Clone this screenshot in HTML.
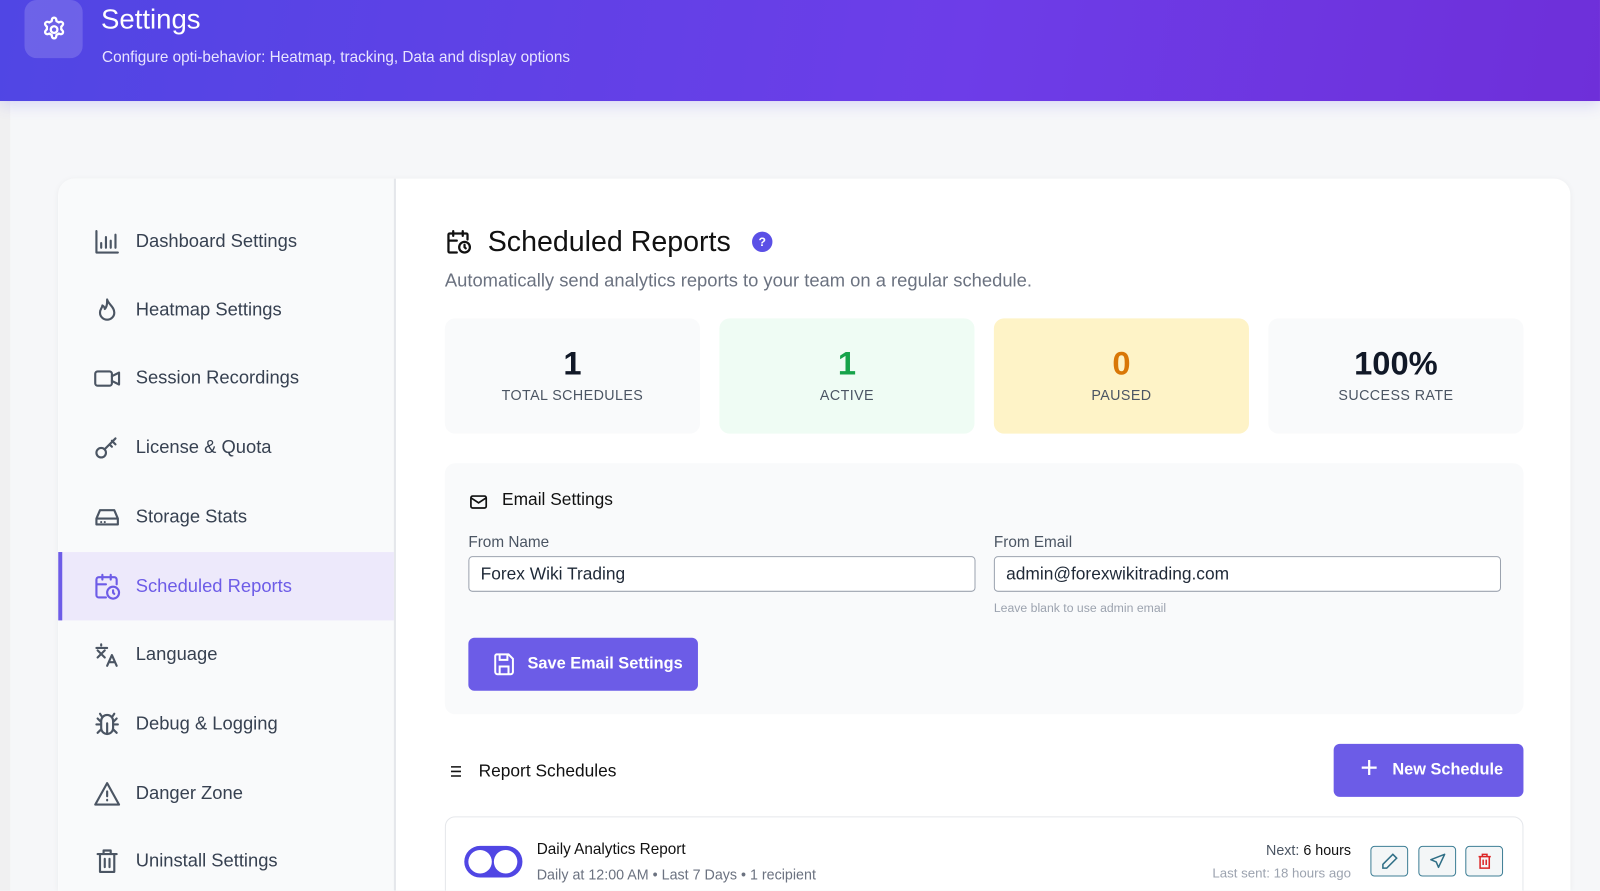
<!DOCTYPE html>
<html><head><meta charset="utf-8"><style>
*{box-sizing:border-box;margin:0;padding:0}
html,body{width:1600px;height:891px;overflow:hidden;background:#f6f7f9}
#w{position:absolute;left:0;top:0;width:1568px;height:873px;transform:scale(1.0204);transform-origin:0 0;font-family:"Liberation Sans",sans-serif;color:#111827;overflow:hidden}
.lstrip{position:absolute;left:0;top:99px;width:10px;height:774px;background:#f0f0f1}
.hdr{position:absolute;left:0;top:0;width:1568px;height:99px;background:linear-gradient(100deg,#5046e4 0%,#6d3de8 60%,#6e2fd9 100%);box-shadow:0 4px 14px rgba(80,70,230,.18)}
.gear{position:absolute;left:24px;top:0;width:57px;height:57px;border-radius:12px;background:rgba(255,255,255,.16);display:flex;align-items:center;justify-content:center}
.hdr h1{position:absolute;left:99px;top:4px;font-size:27px;font-weight:400;color:#fff}
.hdr p{position:absolute;left:100px;top:48px;font-size:15px;color:#e8e4ff}
.card{position:absolute;left:57px;top:175px;width:1482px;height:698px;background:#fff;border-radius:16px 16px 0 0;box-shadow:0 1px 6px rgba(0,0,0,.05);overflow:hidden}
.side{position:absolute;left:0;top:0;width:331px;height:100%;background:#f9fafb;border-right:2px solid #e5e7eb}
.it{position:absolute;left:0;width:329px;height:67px;display:flex;align-items:center;padding-left:34px;font-size:18px;color:#374151;white-space:nowrap}
.it svg{width:28px;height:28px;margin-right:14px;fill:none;stroke:#4b5563;stroke-width:1.8;stroke-linecap:round;stroke-linejoin:round}
.it.act{background:#ede9fb;color:#6d5ce7;border-left:4px solid #6d5ce7;padding-left:30px}
.it.act svg{stroke:#6d5ce7}
.main{position:absolute;left:379px;top:0;width:1060px;height:698px}
.abs{position:absolute;white-space:nowrap}
.stat{position:absolute;top:137px;width:250px;height:113px;border-radius:10px;text-align:center}
.stat b{display:block;margin-top:26px;font-size:32px;line-height:36px}
.stat span{display:block;margin-top:5px;font-size:14px;color:#4b5563;letter-spacing:.4px}
.inp{position:absolute;height:35px;border:1px solid #9ca3af;border-radius:4px;background:#fff;font-size:17px;padding:7px 11px;color:#1f2937;white-space:nowrap}
.btn{position:absolute;background:#6c5ce7;color:#fff;border-radius:6px;font-weight:700;font-size:16px;display:flex;align-items:center;white-space:nowrap}
.ab{position:absolute;top:654px;width:37px;height:30px;border:1.5px solid #3f7f96;border-radius:4px;background:#f3f6f7;display:flex;align-items:center;justify-content:center}
</style></head><body><div id="w">
<div class="lstrip"></div>
<div class="hdr">
<div class="gear"><svg width="30" height="30" viewBox="0 0 24 24" fill="none" stroke="#fff" stroke-width="1.8" stroke-linejoin="round"><path d="M10.3 3.3a1.7 1.7 0 0 1 3.4 0l.2 1.1a7 7 0 0 1 1.8 1l1-.4a1.7 1.7 0 0 1 1.7 2.9l-.8.8a7 7 0 0 1 0 2.1l.8.8a1.7 1.7 0 0 1-1.7 2.9l-1-.4a7 7 0 0 1-1.8 1l-.2 1.1a1.7 1.7 0 0 1-3.4 0l-.2-1.1a7 7 0 0 1-1.8-1l-1 .4a1.7 1.7 0 0 1-1.7-2.9l.8-.8a7 7 0 0 1 0-2.1l-.8-.8a1.7 1.7 0 0 1 1.7-2.9l1 .4a7 7 0 0 1 1.8-1z" transform="translate(0 1)"/><circle cx="12" cy="12" r="2.6"/></svg></div>
<h1>Settings</h1>
<p>Configure opti-behavior: Heatmap, tracking, Data and display options</p>
</div>
<div class="card">
<div class="side">
<div class="it" style="top:28px"><svg viewBox="0 0 24 24"><path d="M3 3v18h18M7 17v-4M11 17V8M15 17v-6M19 17V6"/></svg>Dashboard Settings</div>
<div class="it" style="top:95px"><svg viewBox="0 0 24 24"><path d="M12 3c1 4 6 6 6 11a6 6 0 0 1-12 0c0-3 2-4 2-6 2 1 2 3 2 3 2-2 2-5 2-8z"/></svg>Heatmap Settings</div>
<div class="it" style="top:162px"><svg viewBox="0 0 24 24"><rect x="2" y="6" width="14" height="12" rx="2"/><path d="M16 10l6-3v10l-6-3"/></svg>Session Recordings</div>
<div class="it" style="top:230px"><svg viewBox="0 0 24 24"><circle cx="7" cy="16" r="4"/><path d="M10 13l9-9M16 6l3 3M14 9l2 2"/></svg>License &amp; Quota</div>
<div class="it" style="top:298px"><svg viewBox="0 0 24 24"><path d="M3 13l3-7h12l3 7v5H3z M3 13h18M7 16h.01M10 16h.01"/></svg>Storage Stats</div>
<div class="it act" style="top:366px"><svg viewBox="0 0 24 24"><path d="M11 21H5a2 2 0 0 1-2-2V6a2 2 0 0 1 2-2h13a2 2 0 0 1 2 2v4M15 2v4M8 2v4M3 10h8"/><circle cx="17" cy="17" r="5"/><path d="M17 15v2l1 1"/></svg>Scheduled Reports</div>
<div class="it" style="top:433px"><svg viewBox="0 0 24 24"><path d="M3 6h9M7 3v1M4 8l6 6M10 8l-6 6M12 21l4-9 4 9M13.5 18h5"/></svg>Language</div>
<div class="it" style="top:501px"><svg viewBox="0 0 24 24"><path d="M8 6l-2-3M16 6l2-3M7 9a5 5 0 0 1 10 0v6a5 5 0 0 1-10 0zM12 11v8M3 12h4M17 12h4M4 7l3 3M20 7l-3 3M4 19l3-3M20 19l-3-3"/></svg>Debug &amp; Logging</div>
<div class="it" style="top:569px"><svg viewBox="0 0 24 24"><path d="M12 3l10 18H2zM12 10v4M12 17v.5"/></svg>Danger Zone</div>
<div class="it" style="top:635px"><svg viewBox="0 0 24 24"><path d="M4 6h16M9 6V3h6v3M6 6v15h12V6M10 10v7M14 10v7"/></svg>Uninstall Settings</div>
</div>
<div class="main">
<svg class="abs" style="left:0;top:48px" width="28" height="28" viewBox="0 0 24 24" fill="none" stroke="#111" stroke-width="1.9" stroke-linecap="round"><path d="M10 21H4a1 1 0 0 1-1-1V6a1 1 0 0 1 1-1h14a1 1 0 0 1 1 1v4M15 3v4M7 3v4M3 11h7"/><circle cx="16.5" cy="16.5" r="4.5"/><path d="M16.5 14.5v2l1 1"/></svg>
<div class="abs" style="left:42px;top:46px;font-size:28px;font-weight:400;color:#111">Scheduled Reports</div>
<div class="abs" style="left:301px;top:52px;width:20px;height:20px;border-radius:50%;background:#5b50e6;color:#fff;font-size:12px;font-weight:700;text-align:center;line-height:20px">?</div>
<div class="abs" style="left:0;top:90px;font-size:18px;color:#6b7280">Automatically send analytics reports to your team on a regular schedule.</div>
<div class="stat" style="left:0;background:#f9fafb"><b>1</b><span>TOTAL SCHEDULES</span></div>
<div class="stat" style="left:269px;background:#effcf4"><b style="color:#16a34a">1</b><span>ACTIVE</span></div>
<div class="stat" style="left:538px;background:#fef3c7"><b style="color:#d97706">0</b><span>PAUSED</span></div>
<div class="stat" style="left:807px;background:#f9fafb"><b>100%</b><span>SUCCESS RATE</span></div>
<div class="abs" style="left:0;top:279px;width:1057px;height:246px;background:#f9fafb;border-radius:10px"></div>
<svg class="abs" style="left:23px;top:307px" width="20" height="20" viewBox="0 0 24 24" fill="none" stroke="#111" stroke-width="2"><rect x="3" y="5" width="18" height="14" rx="2"/><path d="M3 7l9 6 9-6"/></svg>
<div class="abs" style="left:56px;top:305px;font-size:17px;color:#111">Email Settings</div>
<div class="abs" style="left:23px;top:348px;font-size:15px;color:#4b5563">From Name</div>
<div class="abs" style="left:538px;top:348px;font-size:15px;color:#4b5563">From Email</div>
<div class="inp" style="left:23px;top:370px;width:497px">Forex Wiki Trading</div>
<div class="inp" style="left:538px;top:370px;width:497px">admin@forexwikitrading.com</div>
<div class="abs" style="left:538px;top:414px;font-size:12px;color:#9ca3af">Leave blank to use admin email</div>
<div class="btn" style="left:23px;top:450px;width:225px;height:52px;padding-left:22px"><svg width="26" height="26" viewBox="0 0 24 24" fill="none" stroke="#fff" stroke-width="1.8" style="margin-right:10px"><path d="M5 3h11l4 4v12a2 2 0 0 1-2 2H6a2 2 0 0 1-2-2V5a2 2 0 0 1 1-2zM8 3v5h7V3M8 21v-7h8v7"/></svg>Save Email Settings</div>
<svg class="abs" style="left:0;top:572px" width="18" height="18" viewBox="0 0 24 24" fill="none" stroke="#111" stroke-width="2"><path d="M8 6h13M8 12h13M8 18h13M3 6h.01M3 12h.01M3 18h.01"/></svg>
<div class="abs" style="left:33px;top:571px;font-size:17px;color:#111">Report Schedules</div>
<div class="btn" style="left:871px;top:554px;width:186px;height:52px;padding-left:26px"><span style="font-size:30px;font-weight:300;margin-right:14px;margin-top:-4px">+</span>New Schedule</div>
<div class="abs" style="left:0;top:625px;width:1057px;height:100px;border:1px solid #e5e7eb;border-radius:10px;background:#fff"></div>
<div class="abs" style="left:19px;top:654px;width:57px;height:31px;border-radius:16px;background:#5046e4"><div style="position:absolute;left:4px;top:4px;width:23px;height:23px;border-radius:50%;background:#fff"></div><div style="position:absolute;left:29px;top:4px;width:23px;height:23px;border-radius:50%;background:#fff"></div></div>
<div class="abs" style="left:90px;top:649px;font-size:15px;color:#111">Daily Analytics Report</div>
<div class="abs" style="left:90px;top:674px;font-size:14px;color:#6b7280">Daily at 12:00 AM • Last 7 Days • 1 recipient</div>
<div class="abs" style="left:688px;width:200px;text-align:right;top:650px;font-size:14px;color:#4b5563">Next: <span style="color:#111">6 hours</span></div>
<div class="abs" style="left:688px;width:200px;text-align:right;top:673px;font-size:13px;color:#9ca3af">Last sent: 18 hours ago</div>
<div class="ab" style="left:907px"><svg width="18" height="18" viewBox="0 0 24 24" fill="none" stroke="#2f6f86" stroke-width="2"><path d="M16 3l5 5L8 21H3v-5z"/></svg></div>
<div class="ab" style="left:954px"><svg width="18" height="18" viewBox="0 0 24 24" fill="none" stroke="#2f6f86" stroke-width="2" stroke-linejoin="round"><path d="M21 3L3 10l7 3 3 7z"/></svg></div>
<div class="ab" style="left:1000px"><svg width="18" height="18" viewBox="0 0 24 24" fill="none" stroke="#dc2626" stroke-width="2"><path d="M4 6h16M9 6V3h6v3M6 6v15h12V6M10 10v7M14 10v7"/></svg></div>
</div>
</div>
</div></body></html>
